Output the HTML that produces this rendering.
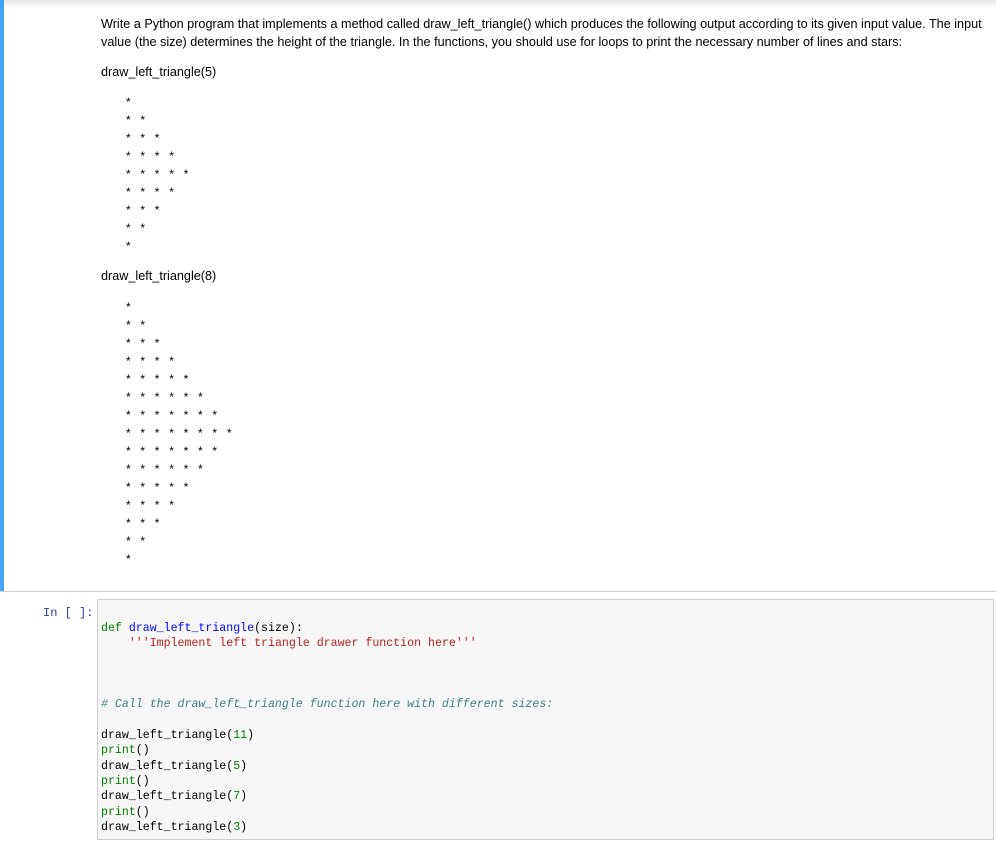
<!DOCTYPE html>
<html><head><meta charset="utf-8"><style>
body{margin:0;width:996px;height:859px;background:#fff;position:relative;overflow:hidden;font-family:"Liberation Sans",Arial,sans-serif;color:#000}
.top{position:absolute;left:0;top:0;width:996px;height:8px;background:linear-gradient(#e8e8e8,#fff)}
.bar{position:absolute;left:0;top:0;width:4px;height:592px;background:#42a5f5}
.hr{position:absolute;left:0;top:591px;width:996px;height:1px;background:#cfcfcf}
.p{position:absolute;left:101px;font-size:12.65px;white-space:nowrap;line-height:18px}
.s{position:absolute;left:126px;font-size:12px;white-space:pre;font-family:"Liberation Sans",sans-serif;letter-spacing:3.2px;line-height:12px}
.code{position:absolute;left:97px;top:599px;width:895px;height:239px;background:#f7f7f7;border:1px solid #cfcfcf}
.code pre{margin:0;position:absolute;left:3px;top:21px;font-family:"Liberation Mono",monospace;font-size:11.6px;line-height:15.3px;color:#000}
.k{color:#008000}.f{color:#0000ff}.st{color:#ba2121}.c{color:#408080;font-style:italic}.n{color:#008000}.b{color:#008000}
.in{position:absolute;left:43px;top:606px;font-family:"Liberation Mono",monospace;font-size:12px;color:#303f9f}
</style></head><body>
<div class="top"></div><div class="bar"></div><div class="hr"></div>
<div class="p" style="top:15px">Write a Python program that implements a method called draw_left_triangle() which produces the following output according to its given input value. The input</div>
<div class="p" style="top:33px">value (the size) determines the height of the triangle. In the functions, you should use for loops to print the necessary number of lines and stars:</div>
<div class="p" style="top:63px">draw_left_triangle(5)</div>
<div class="s" style="top:96px">*</div>
<div class="s" style="top:114px">* *</div>
<div class="s" style="top:132px">* * *</div>
<div class="s" style="top:150px">* * * *</div>
<div class="s" style="top:168px">* * * * *</div>
<div class="s" style="top:186px">* * * *</div>
<div class="s" style="top:204px">* * *</div>
<div class="s" style="top:222px">* *</div>
<div class="s" style="top:240px">*</div>
<div class="p" style="top:267px">draw_left_triangle(8)</div>
<div class="s" style="top:301px">*</div>
<div class="s" style="top:319px">* *</div>
<div class="s" style="top:337px">* * *</div>
<div class="s" style="top:355px">* * * *</div>
<div class="s" style="top:373px">* * * * *</div>
<div class="s" style="top:391px">* * * * * *</div>
<div class="s" style="top:409px">* * * * * * *</div>
<div class="s" style="top:427px">* * * * * * * *</div>
<div class="s" style="top:445px">* * * * * * *</div>
<div class="s" style="top:463px">* * * * * *</div>
<div class="s" style="top:481px">* * * * *</div>
<div class="s" style="top:499px">* * * *</div>
<div class="s" style="top:517px">* * *</div>
<div class="s" style="top:535px">* *</div>
<div class="s" style="top:553px">*</div>
<div class="in">In [ ]:</div>
<div class="code"><pre><span class="k">def</span> <span class="f">draw_left_triangle</span>(size):
    <span class="st">'''Implement left triangle drawer function here'''</span>



<span class="c"># Call the draw_left_triangle function here with different sizes:</span>

draw_left_triangle(<span class="n">11</span>)
<span class="b">print</span>()
draw_left_triangle(<span class="n">5</span>)
<span class="b">print</span>()
draw_left_triangle(<span class="n">7</span>)
<span class="b">print</span>()
draw_left_triangle(<span class="n">3</span>)</pre></div>
</body></html>
